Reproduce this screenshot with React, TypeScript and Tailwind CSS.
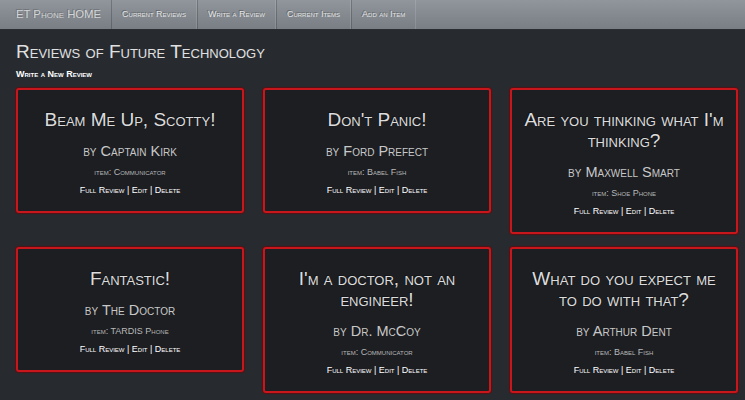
const navLinks = ["Current Reviews", "Write a Review", "Current Items", "Add an Item"];

type Review = {
  title: string;
  author: string;
  item: string;
};

const reviews: Review[] = [
  { title: "Beam Me Up, Scotty!", author: "Captain Kirk", item: "Communicator" },
  { title: "Don't Panic!", author: "Ford Prefect", item: "Babel Fish" },
  { title: "Are you thinking what I'm thinking?", author: "Maxwell Smart", item: "Shoe Phone" },
  { title: "Fantastic!", author: "The Doctor", item: "TARDIS Phone" },
  { title: "I'm a doctor, not an engineer!", author: "Dr. McCoy", item: "Communicator" },
  { title: "What do you expect me to do with that?", author: "Arthur Dent", item: "Babel Fish" },
];

function ReviewCard({ review }: { review: Review }) {
  return (
    <div className="border-2 border-[#c8161d] rounded-[3px] bg-[#1c1e22] shadow-[0_0_1px_1px_rgba(120,0,0,0.6)] px-[10px] pt-[19px] pb-[15px] text-center">
      <h3 className="text-[19px] leading-[21px] text-[#dcdcdc] [text-shadow:-1px_-1px_0_rgba(0,0,0,0.3)]">
        {review.title}
      </h3>
      <p className="mt-[12px] text-[14.5px] leading-[18px] text-[#c8c8c8]">by {review.author}</p>
      <p className="mt-[6px] text-[9px] leading-[12px] text-[#b8b8b8]">item: {review.item}</p>
      <p className="mt-[6px] text-[9px] leading-[12px] text-white">
        <a href="#">Full Review</a> | <a href="#">Edit</a> | <a href="#">Delete</a>
      </p>
    </div>
  );
}

export default function App() {
  return (
    <div className="min-h-[400px] bg-[#272b30] font-['Liberation_Sans',Arial,sans-serif] [font-variant:small-caps]">
      <nav className="flex h-[30px] items-stretch border-b border-[#2a2e33] bg-gradient-to-b from-[#90969c] to-[#787e84]">
        <a href="#" className="flex items-center pl-4 pr-[10px] text-[11.3px] text-[#d4d4d4] [text-shadow:-1px_-1px_0_rgba(0,0,0,0.2)]">
          ET Phone HOME
        </a>
        {navLinks.map((label) => (
          <a
            key={label}
            href="#"
            className="flex items-center px-[10px] border-l border-l-[rgba(0,0,0,0.2)] border-r border-r-[rgba(255,255,255,0.12)] text-[9px] text-[#e4e4e4] [text-shadow:-1px_-1px_0_rgba(0,0,0,0.3)]"
          >
            {label}
          </a>
        ))}
      </nav>

      <div className="px-4">
        <h1 className="mt-[11px] text-[19px] leading-[22px] text-[#e0e0e0]">Reviews of Future Technology</h1>
        <a href="#" className="block mt-[5px] text-[9px] leading-[12px] font-bold text-white">
          Write a New Review
        </a>

        <div className="mt-[8px] grid w-[722px] grid-cols-3 items-start gap-x-[19px] gap-y-[13px]">
          {reviews.map((r) => (
            <ReviewCard key={r.title} review={r} />
          ))}
        </div>
      </div>
    </div>
  );
}
